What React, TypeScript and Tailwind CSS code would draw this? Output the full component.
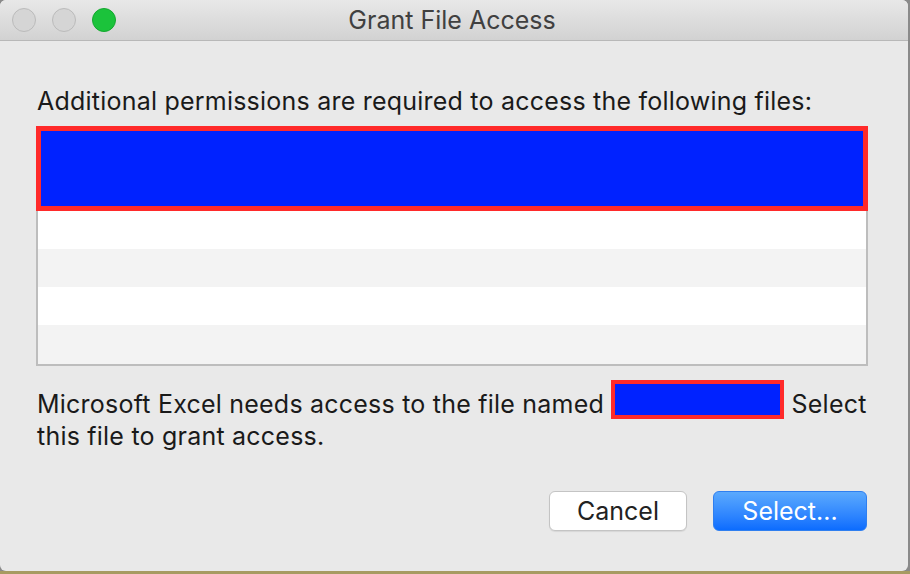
import React from "react";

export default function App() {
  const font = { fontFamily: "Inter, 'Noto Sans', sans-serif" };
  return (
    <div className="w-[910px] h-[574px] bg-[#8a8a8a] flex flex-col overflow-hidden" style={font}>
      <div className="flex h-[571px]">
        <div className="w-[908px] h-[571px] bg-[#e9e9e9] rounded-[6px] overflow-hidden flex flex-col">
          {/* title bar */}
          <div className="h-[41px] shrink-0 bg-gradient-to-b from-[#e8e8e8] to-[#d2d2d2] border-b border-[#b8b8b8] relative flex items-center justify-center">
            <div className="absolute left-[12px] top-[8px] flex gap-[16px]">
              <div className="w-[24px] h-[24px] rounded-full bg-[#d5d5d5] border border-[#bbbbbb]" />
              <div className="w-[24px] h-[24px] rounded-full bg-[#d5d5d5] border border-[#bbbbbb]" />
              <div className="w-[24px] h-[24px] rounded-full bg-[#1bc33b] border border-[#14a82f]" />
            </div>
            <span className="text-[25px] leading-[32px] text-[#404040] pr-[4px]">Grant File Access</span>
          </div>
          {/* body */}
          <div className="pl-[36px] pr-[40px] pt-[44px] flex flex-col">
            <div className="text-[25px] leading-[32px] tracking-[0.22px] text-[#1a1a1a] pl-[1px] whitespace-nowrap">
              Additional permissions are required to access the following files:
            </div>
            <div className="mt-[9px] w-[832px] h-[240px] border-2 border-[#bdbdbd] border-t-0 flex flex-col relative">
              <div className="-mx-[2px] h-[85px] shrink-0 border-[5px] border-[#ff2a2a] bg-[#0022ff] w-[832px]" />
              <div className="h-[38px] bg-white" />
              <div className="h-[38px] bg-[#f3f3f3]" />
              <div className="h-[38px] bg-white" />
              <div className="flex-1 bg-[#f3f3f3]" />
            </div>
            <div className="mt-[22px] text-[25px] leading-[32px] tracking-[0.22px] text-[#1a1a1a] pl-[1px]">
              Microsoft Excel needs access to the file named{" "}
              <span className="inline-block w-[173px] h-[39px] border-[4px] border-[#ff2a2a] bg-[#0022ff] align-[-6px] -mt-[10px]" />{" "}
              Select this file to grant access.
            </div>
            <div className="mt-[39px] flex justify-end gap-[26px] pr-[1px]">
              <button className="w-[138px] h-[40px] rounded-[6px] bg-white border border-[#c4c4c4] text-[25px] leading-[32px] text-[#222222] shadow-[0_1px_1px_rgba(0,0,0,0.08)]">
                Cancel
              </button>
              <button className="w-[154px] h-[40px] rounded-[6px] bg-gradient-to-b from-[#5ba9fd] to-[#0b6cfe] border border-[#2f7ff0] text-[25px] leading-[32px] text-white">
                Select...
              </button>
            </div>
          </div>
        </div>
        <div className="w-[2px]" />
      </div>
      <div className="h-[3px] bg-[#a79b62]" />
    </div>
  );
}
